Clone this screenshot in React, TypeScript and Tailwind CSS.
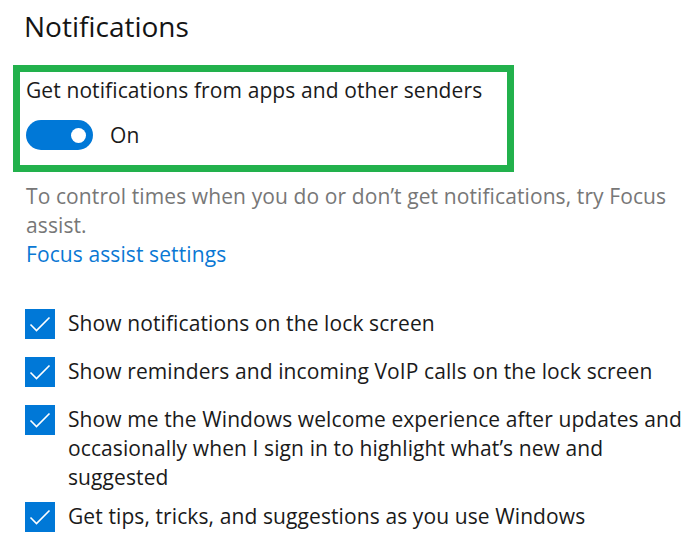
import React from "react";

function Check() {
  return (
    <div className="w-[30px] h-[30px] bg-[#0078d7] flex items-center justify-center shrink-0">
      <svg width="30" height="30" viewBox="0 0 30 30" fill="none">
        <path d="M5.5 15.5 L11.5 21.5 L24.5 8.5" stroke="white" strokeWidth="1.6" />
      </svg>
    </div>
  );
}

function Row({ children, className }: { children: React.ReactNode; className?: string }) {
  return (
    <div className={"flex items-start gap-[13px] " + (className ?? "")}>
      <Check />
      <div className="leading-[29px] w-[624px]">{children}</div>
    </div>
  );
}

export default function App() {
  return (
    <div
      className="w-[695px] h-[553px] bg-white text-[#1a1a1a] overflow-hidden"
      style={{ fontFamily: '"Open Sans", "Noto Sans", sans-serif' }}
    >
      <div className="pl-[24px] pt-[7px] text-[28px] leading-[38px] text-[#141414]">Notifications</div>
      <div className="ml-[13px] mt-[20px] w-[501px] h-[107px] border-[7px] border-[#22b14c] pl-[6px] pt-[4px] tracking-[0.1px]">
        <div className="text-[21px] leading-[29px]">Get notifications from apps and other senders</div>
        <div className="flex items-center mt-[15px] gap-[17px]">
          <div className="w-[67px] h-[30px] rounded-full bg-[#0078d7] relative">
            <div className="absolute right-[7px] top-[7.5px] w-[15px] h-[15px] rounded-full bg-white" />
          </div>
          <div className="text-[21px] leading-[29px]">On</div>
        </div>
      </div>
      <div className="pl-[26px] pt-[10px] text-[21px] leading-[29px] w-[680px] tracking-[0.1px]">
        <div className="text-[#777777]">
          To control times when you do or don’t get notifications, try Focus assist.
        </div>
        <div className="text-[#0a78d4]">Focus assist settings</div>
      </div>
      <div className="pl-[25px] pt-[40px] flex flex-col text-[21px] tracking-[0.1px]">
        <Row>Show notifications on the lock screen</Row>
        <Row className="mt-[18px]">Show reminders and incoming VoIP calls on the lock screen</Row>
        <Row className="mt-[18px]">
          Show me the Windows welcome experience after updates and occasionally when I sign in to highlight what’s new and suggested
        </Row>
        <Row className="mt-[10px]">Get tips, tricks, and suggestions as you use Windows</Row>
      </div>
    </div>
  );
}
